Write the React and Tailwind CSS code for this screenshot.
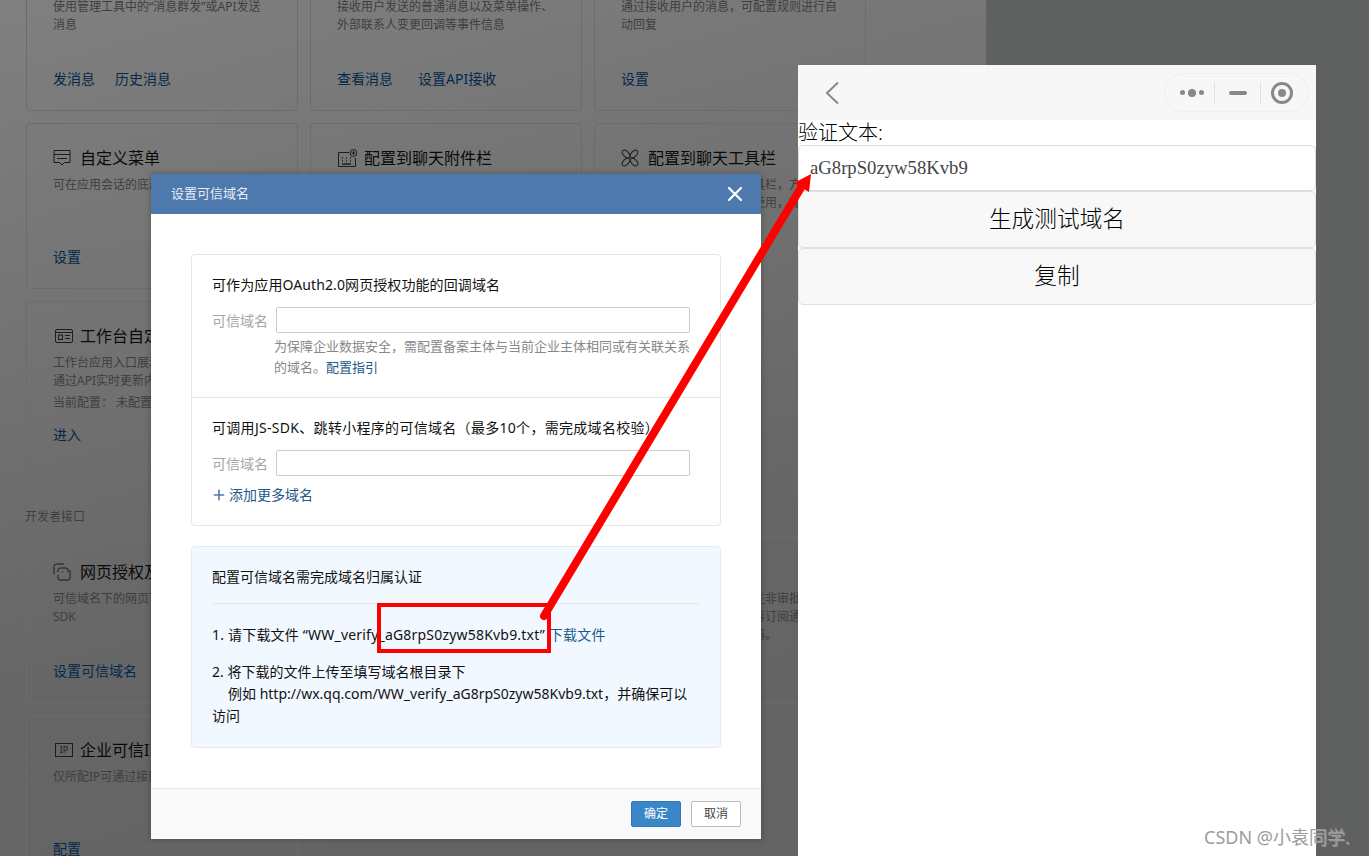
// App.jsx - trusted domain dialog over the admin page, with phone preview
import { X, Plus } from 'lucide-react'

const font = 'font-["Noto_Sans","Noto_Sans_CJK_SC",sans-serif]'

function MenuIcon() {
  return (
    <svg width="18" height="18" viewBox="0 0 18 18" fill="none" stroke="#1c1c1c" strokeWidth="1">
      <path d="M1 1.500h16v12h-5.500l-2.500 2.500-2.500-2.500H1z" />
      <path d="M1 5.500h16M4 9.500h10" />
    </svg>
  )
}

function KeyboardIcon() {
  return (
    <svg width="20" height="18" viewBox="0 0 20 18" fill="none" stroke="#1c1c1c" strokeWidth="1">
      <path d="M12 3.500H1.500v14h17V9" />
      <circle cx="16.500" cy="4" r="3.400" />
      <path d="M16.500 2v4M14.500 4h4" />
      <path d="M5 9h1M9 9h1M13 9h1M5 12h1M9 12h1M13 12h1M5 15h9" strokeWidth="1.400" />
    </svg>
  )
}

function ToolIcon() {
  return (
    <svg width="18" height="18" viewBox="0 0 18 18" fill="none" stroke="#1c1c1c" strokeWidth="1">
      <ellipse cx="5" cy="5" rx="4.600" ry="2.700" transform="rotate(45 5 5)" />
      <ellipse cx="13" cy="5" rx="4.600" ry="2.700" transform="rotate(-45 13 5)" />
      <ellipse cx="5" cy="13" rx="4.600" ry="2.700" transform="rotate(-45 5 13)" />
      <ellipse cx="13" cy="13" rx="4.600" ry="2.700" transform="rotate(45 13 13)" />
    </svg>
  )
}

function CardIcon() {
  return (
    <svg width="18" height="18" viewBox="0 0 18 18" fill="none" stroke="#1c1c1c" strokeWidth="1" className="ml-[2px]">
      <rect x="0.500" y="2.500" width="17" height="13" rx="1.500" />
      <path d="M0.500 5.500h17" />
      <rect x="3.500" y="8" width="4" height="4.500" />
      <path d="M10 8.500h5M10 11.500h5" />
    </svg>
  )
}

function LinkIcon() {
  return (
    <svg width="18" height="18" viewBox="0 0 18 18" fill="none" stroke="#1c1c1c" strokeWidth="1">
      <path d="M1 11V3.500A2.500 2.500 0 0 1 3.500 1H11M5 9V7a2 2 0 0 1 2-2h6a2 2 0 0 1 2 2v2M10 9h-1M17 7v8a2 2 0 0 1-2 2H7a2 2 0 0 1-2-2v-3" />
    </svg>
  )
}

function IpIcon() {
  return (
    <div className="ml-[2px] w-[18px] h-[14px] border border-[#1c1c1c] text-[9px] leading-[12px] text-center text-[#1c1c1c]">IP</div>
  )
}

function Card({ icon, title, desc, extra, links, linkGap }) {
  return (
    <div className="h-[166px] border border-[#6c6c6c] rounded-[4px] pl-[26px] pr-[26px] pt-[24px] pb-[22px] flex flex-col">
      <div className="h-5 flex items-center text-[16px] text-[#0a0a0a] whitespace-nowrap">
        <span className="w-[27px] flex-none">{icon}</span>
        {title}
      </div>
      <p className="mt-[8px] text-[12px] leading-[18px] text-[#3e3e3e]">{desc}</p>
      {extra && <p className="mt-[4px] text-[12px] leading-[18px] text-[#3e3e3e]">{extra}</p>}
      <div className={'mt-auto h-5 flex items-center text-[14px] text-[#04294a] ' + (linkGap || 'gap-5')}>
        {links.map(function (l) { return <span key={l}>{l}</span> })}
      </div>
    </div>
  )
}

function Field() {
  return (
    <div className="flex items-center">
      <span className="w-[64px] flex-none text-[14px] text-[#a6a6a6]">可信域名</span>
      <div className="w-[414px] h-[26px] border border-[#cccccc] rounded-[2px] bg-white"></div>
    </div>
  )
}

function Dialog() {
  return (
    <div className="absolute left-[151px] top-[174px] w-[610px] h-[665px] bg-white flex flex-col shadow-[0_0_6px_rgba(0,0,0,0.3)]">
      <div className="h-10 flex-none bg-[#4d79ad] pl-5 pr-[14px] flex items-center justify-between">
        <span className="text-[13px] text-[#e6ecf4]">设置可信域名</span>
        <X size={24} strokeWidth={2.2} className="text-white" />
      </div>
      <div className="flex-1 px-10 pt-10">
        <div className="h-[272px] border border-[#e4e6e9] rounded-[4px] flex flex-col">
          <div className="h-[143px] px-5 pt-[19px] border-b border-[#e4e6e9]">
            <p className="text-[14px] leading-[22px] tracking-[0.1px] text-[#111111]">可作为应用OAuth2.0网页授权功能的回调域名</p>
            <div className="mt-[11px]"><Field /></div>
            <p className="mt-[3px] ml-[62px] text-[13px] leading-[21px] text-[#888888]">
              为保障企业数据安全，需配置备案主体与当前企业主体相同或有关联关系的域名。<span className="text-[#1c5a8a]">配置指引</span>
            </p>
          </div>
          <div className="flex-1 px-5 pt-[19px]">
            <p className="text-[14px] leading-[22px] tracking-[0.3px] text-[#111111] whitespace-nowrap">可调用JS-SDK、跳转小程序的可信域名（最多10个，需完成域名校验）</p>
            <div className="mt-[11px]"><Field /></div>
            <div className="mt-[8px] flex items-center gap-[2px] text-[14px] text-[#1c5a8a]">
              <Plus size={16} strokeWidth={2.4} className="-ml-[1px] text-[#4d79ad]" />
              <span>添加更多域名</span>
            </div>
          </div>
        </div>
        <div className="mt-5 h-[202px] border border-[#e2e9f0] rounded-[4px] bg-[#f1f8ff] px-5 pt-[19px]">
          <p className="text-[14px] leading-[22px] text-[#111111]">配置可信域名需完成域名归属认证</p>
          <div className="mt-[15px] border-t border-[#e4e9ee]"></div>
          <p className="mt-[20px] text-[14px] leading-[22px] tracking-[0.2px] text-[#111111] whitespace-nowrap">
            1. 请下载文件 “WW_verify_aG8rpS0zyw58Kvb9.txt” <span className="text-[#1c5a8a]">下载文件</span>
          </p>
          <p className="mt-[15px] text-[14px] leading-[22px] text-[#111111]">
            2. 将下载的文件上传至填写域名根目录下
            <br />
            <span className="ml-[16px]">例如 http://wx.qq.com/WW_verify_aG8rpS0zyw58Kvb9.txt，并确保可以访问</span>
          </p>
        </div>
      </div>
      <div className="h-[51px] flex-none border-t border-[#e4e6e9] bg-[#f9f9f9] pr-5 flex items-center justify-end gap-[10px]">
        <button className="w-[50px] h-[26px] rounded-[2px] bg-[#3a87c8] border border-[#2f77b5] text-[12px] text-white">确定</button>
        <button className="w-[50px] h-[26px] rounded-[2px] bg-white border border-[#bbbbbb] text-[12px] text-[#444444]">取消</button>
      </div>
    </div>
  )
}

function Phone() {
  return (
    <div className="absolute left-[798px] top-[65px] w-[518px] h-[791px] bg-white flex flex-col">
      <div className="h-[55px] flex-none bg-[#f7f7f7] flex items-center justify-between pl-[27px] pr-[7px]">
        <svg width="14" height="24" viewBox="0 0 14 24" fill="none" stroke="#888888" strokeWidth="2">
          <path d="M13 1.500 2 12l11 10.500" />
        </svg>
        <div className="w-[145px] h-[39px] rounded-full border border-[#efefef] flex items-center">
          <div className="w-[49px] flex justify-center items-center gap-[3px] pl-[4px]">
            <span className="w-[5px] h-[5px] rounded-full bg-[#888888]"></span>
            <span className="w-[8px] h-[8px] rounded-full bg-[#888888]"></span>
            <span className="w-[5px] h-[5px] rounded-full bg-[#888888]"></span>
          </div>
          <div className="w-px h-[22px] bg-[#e2e2e2]"></div>
          <div className="w-[45px] flex justify-center">
            <span className="w-[18px] h-[4px] rounded-full bg-[#888888]"></span>
          </div>
          <div className="w-px h-[22px] bg-[#e2e2e2]"></div>
          <div className="flex-1 flex justify-center pr-[6px]">
            <span className="w-[22px] h-[22px] rounded-full border-[3px] border-[#888888] flex items-center justify-center">
              <span className="w-[8px] h-[8px] rounded-full bg-[#888888]"></span>
            </span>
          </div>
        </div>
      </div>
      <div className="h-[25px] flex-none text-[20px] leading-[26px] font-light text-black">验证文本:</div>
      <div className="h-[46px] flex-none border border-[#dddddd] rounded-[5px] pl-[11px] flex items-center font-['Liberation_Serif',serif] text-[18.700px] text-[#444444]">aG8rpS0zyw58Kvb9</div>
      <button className="h-[57px] flex-none border border-[#e0e0e0] rounded-[5px] bg-[#f8f8f8] text-[22.700px] font-light text-black">生成测试域名</button>
      <button className="h-[57px] flex-none border border-[#e0e0e0] rounded-[5px] bg-[#f8f8f8] text-[22.700px] font-light text-black">复制</button>
    </div>
  )
}

export default function App() {
  return (
    <div className={'relative w-[1369px] h-[856px] overflow-hidden flex ' + font}>
      <div className="w-[986px] h-full flex-none bg-[linear-gradient(165deg,#808080,#666666_62%,#636363)] pl-[26px] overflow-hidden">
        <div className="w-[840px] -mt-[55px] grid grid-cols-3 gap-3">
          <Card title="应用消息" desc="使用管理工具中的“消息群发”或API发送消息" links={['发消息', '历史消息']} />
          <Card title="接收消息" desc="接收用户发送的普通消息以及菜单操作、外部联系人变更回调等事件信息" links={['查看消息', '设置API接收']} linkGap="gap-[25px]" />
          <Card title="自动回复" desc="通过接收用户的消息，可配置规则进行自动回复" links={['设置']} />
          <Card icon={<MenuIcon />} title="自定义菜单" desc="可在应用会话的底部设置自定义菜单" links={['设置']} />
          <Card icon={<KeyboardIcon />} title="配置到聊天附件栏" desc="可将应用配置到聊天附件栏" links={['设置']} />
          <Card icon={<ToolIcon />} title="配置到聊天工具栏" desc="可以将应用配置到聊天工具栏，方便成员在会话中快捷打开应用并使用，提升效率" links={['设置']} />
          <Card icon={<CardIcon />} title="工作台自定义展示" desc="工作台应用入口展示可自定义内容，并可通过API实时更新内容" extra="当前配置： 未配置" links={['进入']} />
          <div></div>
          <div></div>
        </div>
        <p className="mt-[41px] mb-[11px] -ml-px text-[12px] leading-[18px] text-[#3e3e3e]">开发者接口</p>
        <div className="w-[840px] grid grid-cols-3 gap-3">
          <Card icon={<LinkIcon />} title="网页授权及JS-SDK" desc="可信域名下的网页可使用网页授权及JS-SDK" links={['设置可信域名']} />
          <Card title="接收事件" desc="可接收审批事件" links={['设置']} />
          <Card title="审批接口" desc="通过接口可以获取全部关注非审批单据和状态信息，可设置回调内容订阅通知变化请在配置时填写回调验证码。" links={['设置']} />
          <Card icon={<IpIcon />} title="企业可信IP" desc="仅所配IP可通过接口获取数据" links={['配置']} />
          <div></div>
          <div></div>
        </div>
      </div>
      <div className="flex-1 bg-[#5f6160]"></div>

      <Dialog />
      <Phone />

      <svg className="absolute left-0 top-0" width="1369" height="856" fill="none">
        <rect x="379" y="605" width="170" height="46" stroke="#ff0000" strokeWidth="4" />
        <line x1="544" y1="616" x2="802" y2="186" stroke="#ff0000" strokeWidth="8" strokeLinecap="round" />
        <polygon points="811,174 809,192 794,183" fill="#ff0000" />
      </svg>

      <span className="absolute left-[1204px] top-[825px] text-[18px] leading-[24px] text-[#9c9c9c] [text-shadow:1px_1px_0_rgba(255,255,255,0.35)]">CSDN @小袁同学.</span>
    </div>
  )
}
